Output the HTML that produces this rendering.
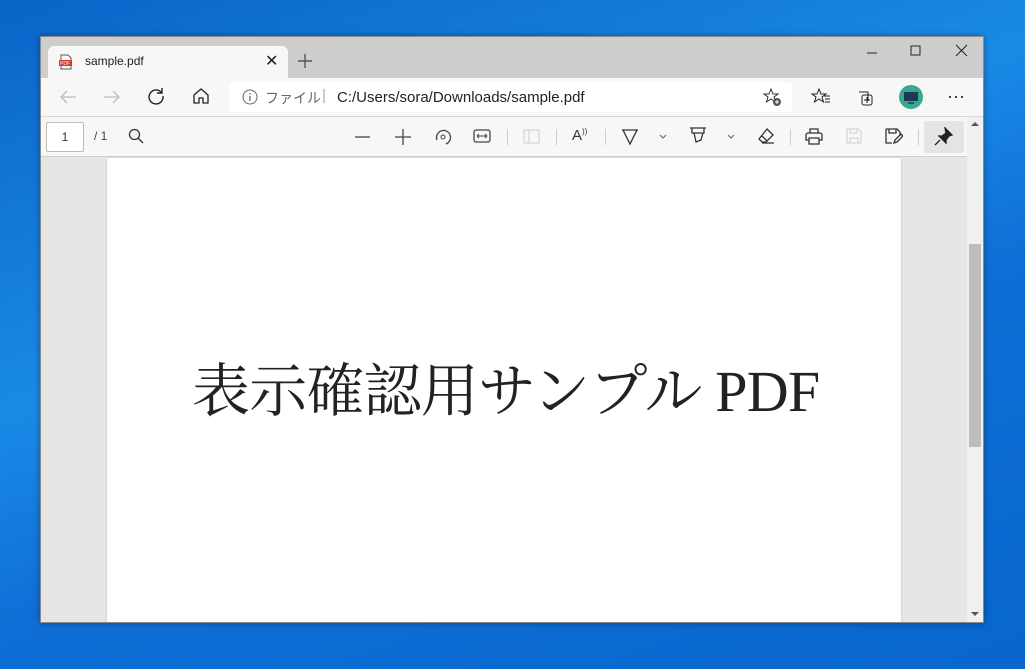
<!DOCTYPE html>
<html><head><meta charset="utf-8"><style>
*{margin:0;padding:0;box-sizing:border-box}
body{width:1025px;height:669px;overflow:hidden;position:relative;font-family:"Liberation Sans","Noto Sans CJK JP",sans-serif;
background:linear-gradient(160deg,#0a64c8 0%,#1a8ae6 40%,#0f6fd6 60%,#0866cc 100%)}
.win{position:absolute;left:40px;top:36px;width:944px;height:587px;background:#e6e6e6;box-shadow:0 0 6px rgba(0,0,0,.35);border:1px solid #8a8a8a;overflow:hidden}
.tabbar{position:absolute;left:0;top:0;width:100%;height:41px;background:#cdcdcd}
.tab{position:absolute;left:7px;top:9px;width:240px;height:32px;background:#f7f7f7;border-radius:6px 6px 0 0;font-size:12px;color:#222}
.addr{position:absolute;left:0;top:41px;width:100%;height:39px;background:#f7f7f7;border-bottom:1px solid #d8d8d8}
.url{position:absolute;left:188px;top:4px;width:563px;height:30px;background:#fff;border-radius:4px;font-size:15px;color:#222}
.tb{position:absolute;left:0;top:80px;width:100%;height:40px;background:#f7f7f7;border-bottom:1px solid #cfcfcf}
.page{position:absolute;left:66px;top:121px;width:794px;height:470px;background:#fff;box-shadow:0 0 2px rgba(0,0,0,.2)}
.sb{position:absolute;right:0;top:80px;width:16px;height:507px;background:#f0f0f0}
svg{position:absolute}
.t{position:absolute}
</style></head><body>
<div class="win">
 <div class="tabbar">
  <div class="tab">
   <svg style="left:10px;top:8px" width="16" height="16" viewBox="0 0 16 16"><path d="M3 1h7l3 3v11H3z" fill="#fff" stroke="#555"/><rect x="1" y="6" width="13" height="6" fill="#d63a2f"/><text x="2" y="11" font-size="5" fill="#fff" font-family="Liberation Sans">PDF</text></svg>
   <span class="t" style="left:37px;top:8px">sample.pdf</span>
   <span class="t" style="left:217px;top:5px;font-size:16px">✕</span>
  </div>
  <svg style="left:256px;top:16px" width="16" height="16"><path d="M8 1v14M1 8h14" stroke="#555" stroke-width="1.4"/></svg>
  <svg style="left:824px;top:14px" width="14" height="14"><path d="M2 1h10" transform="translate(0,1)" stroke="#222"/></svg>
  <svg style="left:869px;top:8px" width="12" height="12"><rect x="1" y="1" width="9" height="9" fill="none" stroke="#222"/></svg>
  <svg style="left:914px;top:7px" width="13" height="13"><path d="M1 1l11 11M12 1L1 12" stroke="#222"/></svg>
 </div>
 <div class="addr">
  <svg style="left:18px;top:11px" width="18" height="16"><path d="M17 8H2M8 2L2 8l6 6" fill="none" stroke="#bbb" stroke-width="1.3"/></svg>
  <svg style="left:62px;top:11px" width="18" height="16"><path d="M1 8h15M10 2l6 6-6 6" fill="none" stroke="#bbb" stroke-width="1.3"/></svg>
  <svg style="left:106px;top:9px" width="18" height="18"><path d="M14 5A7 7 0 1 0 16 9M15 1v5h-5" fill="none" stroke="#222" stroke-width="1.4"/></svg>
  <svg style="left:151px;top:9px" width="18" height="18"><path d="M2 8l7-6 7 6v8h-5v-5H7v5H2z" fill="none" stroke="#222" stroke-width="1.3"/></svg>
  <div class="url">
   <svg style="left:13px;top:7px" width="16" height="16"><circle cx="8" cy="8" r="7" fill="none" stroke="#666"/><path d="M8 7v5M8 4v1.5" stroke="#666" stroke-width="1.3"/></svg>
   <span class="t" style="left:36px;top:6px;color:#666;font-size:14px">ファイル</span>
   <span class="t" style="left:93px;top:5px;color:#aaa">|</span>
   <span class="t" style="left:108px;top:7px">C:/Users/sora/Downloads/sample.pdf</span>
   <svg style="left:534px;top:6px" width="20" height="20"><path d="M8 1l2 5h5l-4 3 1.5 5L8 11l-4.5 3L5 9 1 6h5z" fill="none" stroke="#333"/><circle cx="14" cy="14" r="4" fill="#555"/><path d="M14 12v4M12 14h4" stroke="#fff"/></svg>
  </div>
  <svg style="left:770px;top:10px" width="20" height="18"><path d="M8 1l2 5h5l-4 3 1.5 5L8 11l-4.5 3L5 9 1 6h5z" fill="none" stroke="#222"/><path d="M13 8h6M14 11h5M14 14h5" stroke="#222"/></svg>
  <svg style="left:814px;top:9px" width="20" height="20"><path d="M4 5h9v9" fill="none" stroke="#222"/><rect x="7" y="8" width="10" height="10" rx="2" fill="none" stroke="#222"/><path d="M12 10v6M9 13h6" stroke="#222"/></svg>
  <svg style="left:857px;top:6px" width="26" height="26"><circle cx="13" cy="13" r="12" fill="#3aa88e"/><rect x="6" y="8" width="14" height="9" fill="#1d3a55"/><path d="M10 19h6" stroke="#1d3a55" stroke-width="1.5"/></svg>
  <span class="t" style="left:906px;top:8px;font-size:18px;color:#222">···</span>
 </div>
 <div class="tb">
  <div class="t" style="left:5px;top:5px;width:38px;height:30px;border:1px solid #bbb;border-radius:2px;background:#fff;font-size:12px;text-align:center;line-height:28px;color:#333">1</div>
  <span class="t" style="left:53px;top:12px;font-size:12px;color:#444">/ 1</span>
  <svg style="left:87px;top:11px" width="16" height="16"><circle cx="6.5" cy="6.5" r="5" fill="none" stroke="#333" stroke-width="1.3"/><path d="M10 10l5 5" stroke="#333" stroke-width="1.3"/></svg>
  <svg style="left:314px;top:19px" width="16" height="2"><path d="M0 1h15" stroke="#444" stroke-width="1.3"/></svg>
  <svg style="left:354px;top:12px" width="16" height="16"><path d="M8 0v16M0 8h16" stroke="#444" stroke-width="1.3"/></svg>
  <svg style="left:393px;top:11px" width="18" height="18"><path d="M3 12A7 7 0 1 1 12 16" fill="none" stroke="#444" stroke-width="1.3"/><circle cx="9" cy="9" r="2" fill="none" stroke="#444"/></svg>
  <svg style="left:432px;top:12px" width="18" height="14"><rect x="1" y="1" width="16" height="12" rx="2" fill="none" stroke="#444" stroke-width="1.3"/><path d="M4 7h10M4 7l2-2M4 7l2 2M14 7l-2-2M14 7l-2 2" stroke="#444"/></svg>
  <div class="t" style="left:466px;top:12px;width:1px;height:16px;background:#ccc"></div>
  <svg style="left:482px;top:12px" width="18" height="16"><rect x="1" y="1" width="15" height="13" fill="none" stroke="#ccc"/><path d="M6 1v13" stroke="#ccc"/></svg>
  <div class="t" style="left:515px;top:12px;width:1px;height:16px;background:#ccc"></div>
  <span class="t" style="left:531px;top:10px;font-size:15px;color:#333">A<sup style="font-size:8px">))</sup></span>
  <div class="t" style="left:564px;top:12px;width:1px;height:16px;background:#ccc"></div>
  <svg style="left:580px;top:11px" width="18" height="18"><path d="M1 2h16M2 2l7 14 7-14" fill="none" stroke="#333" stroke-width="1.3"/></svg>
  <svg style="left:618px;top:17px" width="8" height="6"><path d="M1 1l3 3 3-3" fill="none" stroke="#666"/></svg>
  <svg style="left:648px;top:10px" width="18" height="18"><path d="M1 1h16M3 1v5h12V1M5 6l2 9 5-2 2-7" fill="none" stroke="#333" stroke-width="1.3"/></svg>
  <svg style="left:686px;top:17px" width="8" height="6"><path d="M1 1l3 3 3-3" fill="none" stroke="#666"/></svg>
  <svg style="left:716px;top:10px" width="18" height="18"><path d="M10 2l6 6-7 7H5l-3-3zM5 9l5 5M5 16h12" fill="none" stroke="#333" stroke-width="1.3"/></svg>
  <div class="t" style="left:749px;top:12px;width:1px;height:16px;background:#ccc"></div>
  <svg style="left:764px;top:11px" width="18" height="17"><path d="M5 5V1h8v4M3 5h12a2 2 0 0 1 2 2v5h-3M4 12H1V7a2 2 0 0 1 2-2M4 10h10v6H4z" fill="none" stroke="#333" stroke-width="1.3"/></svg>
  <svg style="left:805px;top:11px" width="16" height="16"><path d="M1 1h11l3 3v11H1zM4 1v4h7V1M4 15v-5h8v5" fill="none" stroke="#ccc"/></svg>
  <svg style="left:844px;top:11px" width="18" height="17"><path d="M1 1h11l3 3v4M1 1v14h6M4 1v4h7V1M9 15l1-3 6-6 2 2-6 6z" fill="none" stroke="#333" stroke-width="1.3"/></svg>
  <div class="t" style="left:877px;top:12px;width:1px;height:16px;background:#ccc"></div>
  <div class="t" style="left:883px;top:4px;width:40px;height:32px;background:#e4e4e4;border-radius:3px"></div>
  <svg style="left:893px;top:10px" width="20" height="20"><path d="M11 1l7 7-3 1-3 4 0 3-7-7 3 0 4-3zM6 13l-5 5" fill="#222" stroke="#222" stroke-width="1.3"/></svg>
 </div>
 <div class="page">
  <div class="t" style="left:85px;top:186px;font-family:'Liberation Serif','Noto Serif CJK SC',serif;font-size:58px;color:#222;white-space:nowrap;letter-spacing:-0.8px">表示確認用サンプル PDF</div>
 </div>
 <div class="sb">
  <svg style="left:4px;top:4px" width="8" height="6"><path d="M0 5l4-4 4 4z" fill="#555"/></svg>
  <div class="t" style="left:2px;top:127px;width:12px;height:203px;background:#bdbdbd"></div>
  <svg style="left:4px;top:494px" width="8" height="6"><path d="M0 1l4 4 4-4z" fill="#555"/></svg>
 </div>
</div>
</body></html>
